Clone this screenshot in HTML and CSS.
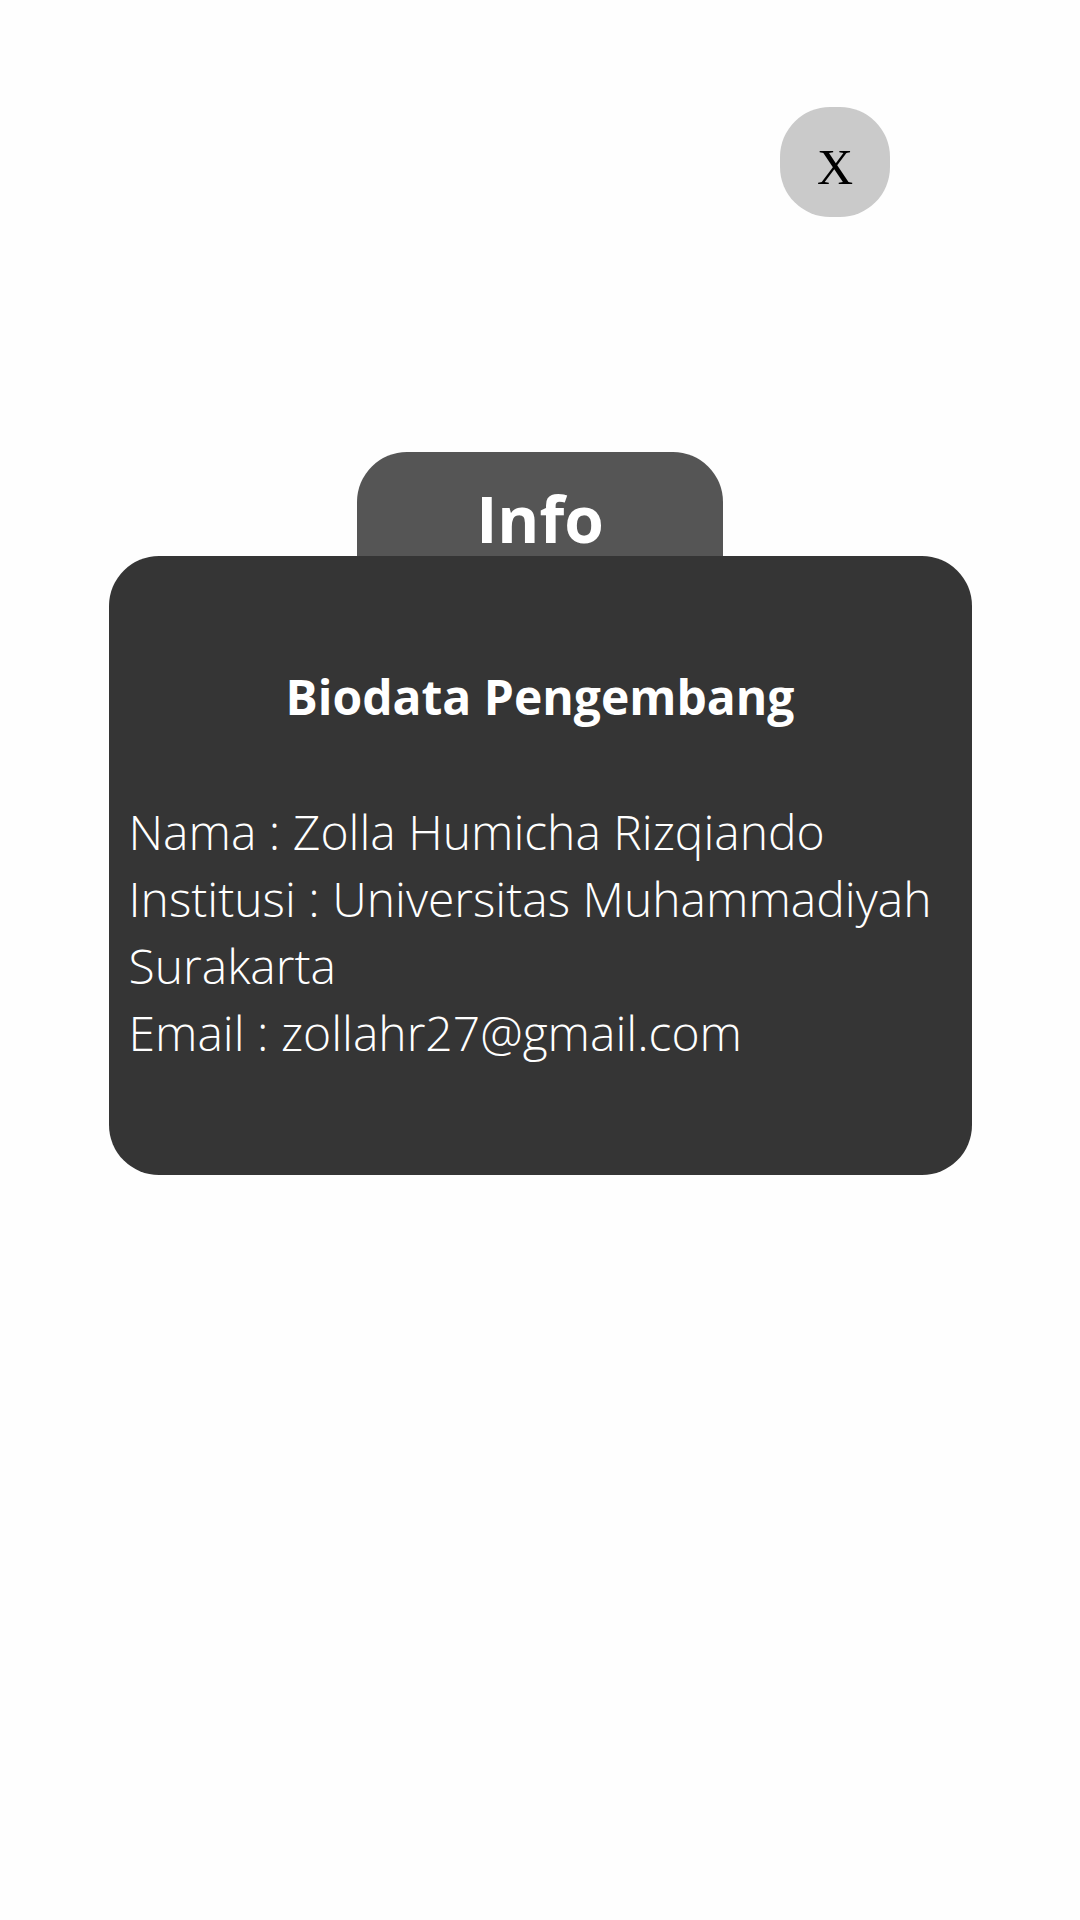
FILE: index.html
```html
<!DOCTYPE html>
<html lang="id">
<head>
<meta charset="utf-8">
<title>Info</title>
<link rel="stylesheet" href="styles.css">
</head>
<body>
<div class="page">
  <div class="topbar">
    <div class="close">X</div>
  </div>
  <div class="panel">
    <div class="tab">Info</div>
    <div class="card">
      <h1 class="title">Biodata Pengembang</h1>
      <p class="body">Nama : Zolla Humicha Rizqiando<br>Institusi : Universitas Muhammadiyah Surakarta<br>Email : zollahr27@gmail.com</p>
    </div>
  </div>
</div>
</body>
</html>
```
FILE: styles.css
```css
html, body {
  margin: 0;
  padding: 0;
  background: #fefefe;
}
.page {
  width: 1080px;
  height: 1920px;
  padding-top: 107px;
  box-sizing: border-box;
  font-family: "Open Sans", "Noto Sans", sans-serif;
}
.topbar {
  display: flex;
  justify-content: flex-end;
  padding-right: 190px;
}
.close {
  width: 110px;
  height: 110px;
  border-radius: 50px;
  background: #cacaca;
  color: #000;
  font-family: "Liberation Serif", "Times New Roman", serif;
  font-size: 50px;
  display: flex;
  align-items: center;
  justify-content: center;
  padding-top: 10px;
  box-sizing: border-box;
}
.panel {
  margin-top: 235px;
  display: flex;
  flex-direction: column;
  align-items: center;
}
.tab {
  width: 366px;
  height: 104px;
  box-sizing: border-box;
  padding-top: 23px;
  border-radius: 50px 50px 0 0;
  background: #555555;
  color: #fff;
  font-weight: 700;
  font-size: 64px;
  line-height: normal;
  text-align: center;
}
.card {
  width: 863px;
  height: 619px;
  box-sizing: border-box;
  border-radius: 50px;
  background: #353535;
  color: #fff;
  padding: 0 20px;
  overflow: hidden;
}
.title {
  margin: 108px 0 0;
  font-size: 48px;
  font-weight: 700;
  line-height: normal;
  text-align: center;
}
.body {
  margin: 69px 0 0;
  font-size: 48px;
  font-weight: 300;
  line-height: 67px;
}
```
